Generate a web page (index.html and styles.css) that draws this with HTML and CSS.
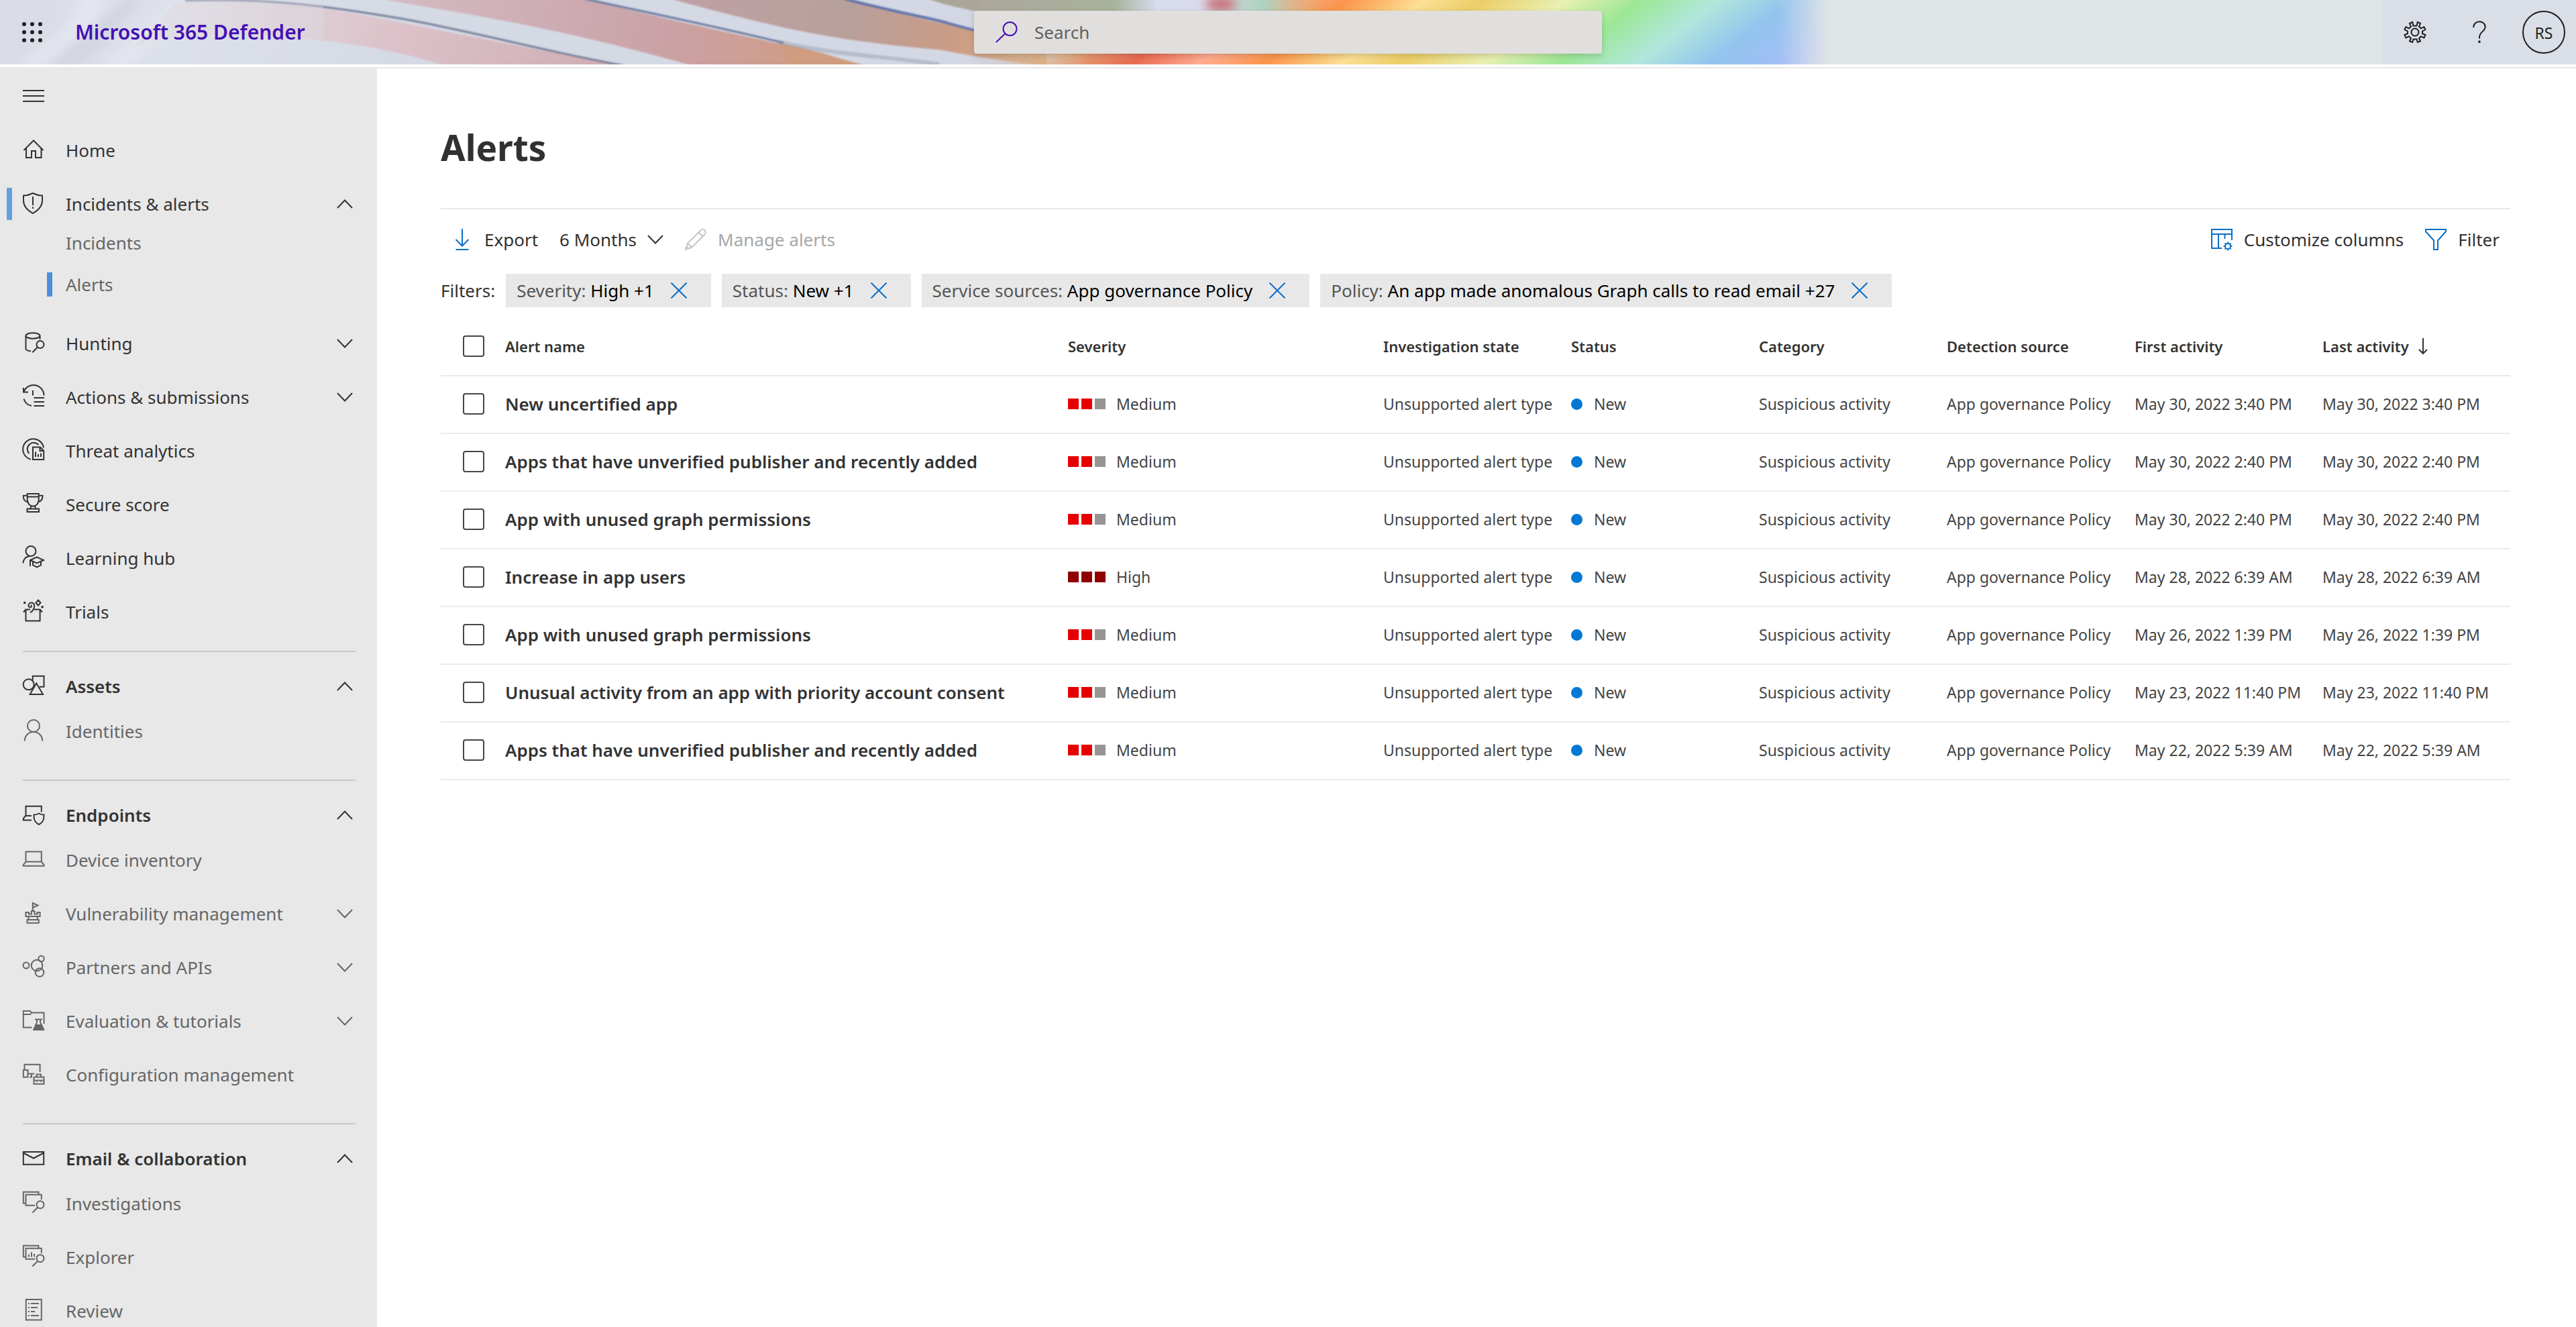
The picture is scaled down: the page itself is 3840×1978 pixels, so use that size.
FILE: index.html
```html
<!DOCTYPE html>
<html lang="en">
<head>
<meta charset="utf-8">
<meta name="viewport" content="width=device-width, initial-scale=1">
<title>Alerts - Microsoft 365 Defender</title>
<link rel="stylesheet" href="styles.css">
</head>
<body>
<svg class="sprite" aria-hidden="true">
  <symbol id="up" viewBox="0 0 24 14"><path d="M1 13 12 1.500 23 13"/></symbol>
  <symbol id="down" viewBox="0 0 24 14"><path d="M1 1 12 12.500 23 1"/></symbol>
  <symbol id="close" viewBox="0 0 24 24"><path d="M.5.5l23 23M23.500.5l-23 23"/></symbol>
</svg>
<div class="app">
  <header class="topbar">
    <svg class="banner" viewBox="0 0 3840 96" preserveAspectRatio="none" aria-hidden="true">
      <defs>
        <linearGradient id="gBase"><stop offset="0" stop-color="#d9dce7"/><stop offset=".06" stop-color="#dfe3ec"/><stop offset=".15" stop-color="#d5dae4"/><stop offset=".4" stop-color="#d3d7e4"/></linearGradient>
        <linearGradient id="gPink" gradientUnits="userSpaceOnUse" x1="270" y1="0" x2="930" y2="96"><stop offset="0" stop-color="#e3dfe5"/><stop offset=".5" stop-color="#dcc1c8"/><stop offset="1" stop-color="#cdadb2"/></linearGradient>
        <linearGradient id="gRose" gradientUnits="userSpaceOnUse" x1="565" y1="0" x2="1300" y2="96"><stop offset="0" stop-color="#d5bcc4"/><stop offset=".55" stop-color="#c9a3a9"/><stop offset=".85" stop-color="#cf9c88"/><stop offset="1" stop-color="#cf9a78"/></linearGradient>
        <linearGradient id="gBrown" gradientUnits="userSpaceOnUse" x1="1050" y1="0" x2="1500" y2="110"><stop offset="0" stop-color="#bfa0a4"/><stop offset=".45" stop-color="#b8a09c"/><stop offset=".8" stop-color="#c99c86"/><stop offset="1" stop-color="#d8aa80"/></linearGradient>
        <linearGradient id="gRainbow" gradientUnits="userSpaceOnUse" x1="1500" y1="85" x2="1965" y2="689">
          <stop offset="0" stop-color="#cfb8a8"/><stop offset=".06" stop-color="#e0b080"/><stop offset=".16" stop-color="#e96a50"/><stop offset=".24" stop-color="#ffac90"/><stop offset=".32" stop-color="#fb954a"/><stop offset=".41" stop-color="#fbe094"/><stop offset=".48" stop-color="#ecce68"/><stop offset=".58" stop-color="#e8f0b2"/><stop offset=".67" stop-color="#9ce795"/><stop offset=".76" stop-color="#b0e7dc"/><stop offset=".85" stop-color="#92c4ee"/><stop offset=".94" stop-color="#a2bdf7"/><stop offset="1" stop-color="#b4c0f8"/>
        </linearGradient>
        <linearGradient id="gIn" gradientUnits="userSpaceOnUse" x1="1440" y1="0" x2="1620" y2="0"><stop offset="0" stop-color="#000"/><stop offset="1" stop-color="#fff"/></linearGradient>
        <linearGradient id="gEnd" gradientUnits="userSpaceOnUse" x1="2650" y1="0" x2="2726" y2="0"><stop offset="0" stop-color="#dfe4e7" stop-opacity="0"/><stop offset="1" stop-color="#dfe4e7"/></linearGradient>
        <linearGradient id="gTop" gradientUnits="userSpaceOnUse" x1="1460" y1="0" x2="1990" y2="0"><stop offset="0" stop-color="#aca89a"/><stop offset=".38" stop-color="#a8b29c"/><stop offset=".5" stop-color="#d8dcec"/><stop offset=".64" stop-color="#d8dcec"/><stop offset=".8" stop-color="#aed2c0"/><stop offset="1" stop-color="#e5a860" stop-opacity="0"/></linearGradient>
        <linearGradient id="gDown" x1="0" y1="0" x2="0" y2="1"><stop offset=".25" stop-color="#fff"/><stop offset=".8" stop-color="#000"/></linearGradient>
        <mask id="mIn"><rect x="1440" width="1340" height="96" fill="url(#gIn)"/></mask>
        <mask id="mTop"><rect x="1440" width="560" height="96" fill="url(#gDown)"/></mask>
        <filter id="soft" x="-50%" y="-50%" width="200%" height="200%"><feGaussianBlur stdDeviation="8"/></filter>
        <filter id="fine"><feGaussianBlur stdDeviation="1"/></filter>
      </defs>
      <rect width="3840" height="96" fill="url(#gBase)"/>
      <g filter="url(#soft)"><path d="M20 100C80 70 110 30 120-6H160C150 40 110 80 80 100Z" fill="#e9ecf4"/><path d="M150 100C190 70 230 30 262-6H276C246 40 220 70 196 100Z" fill="#e7ebf4"/><path d="M66 100C110 60 150 30 190-6H215C180 40 150 70 120 100Z" fill="#cfd3df"/></g>
      <g filter="url(#fine)">
        <path d="M262 4C400-4 480 10 600 34 720 58 800 74 930 98H664C600 78 520 60 400 54 330 50 250 50 200 70Z" fill="url(#gPink)"/>
        <path d="M276 1C400-3 480 8 600 28 720 50 800 74 930 98" fill="none" stroke="#77809c" stroke-width="3"/>
        <path d="M565-2C700 22 830 40 1032 98H1290C1200 70 1080 50 868-2Z" fill="url(#gRose)"/>
        <path d="M998-2C1120 30 1220 60 1400 74 1440 82 1500 92 1560 98V62C1440 46 1380 30 1256-2Z" fill="url(#gBrown)"/>
        <path d="M1160 64C1230 76 1270 96 1300 100H1180Z" fill="#d09c80"/>
        <path d="M870-2C980 22 1080 42 1168 64" fill="none" stroke="#6779a0" stroke-width="3"/>
        <path d="M1258-2C1310 12 1360 22 1400 31 1440 42 1460 48 1500 56" fill="none" stroke="#5f74a8" stroke-width="4"/>
        <path d="M1382-2C1410 8 1440 14 1500 26V-2Z" fill="#a9a597"/>
      </g>
      <path d="M1160 62C1230 80 1320 84 1400 96" fill="none" stroke="#8d92a8" stroke-width="6" stroke-opacity=".4" filter="url(#fine)"/>
      <rect x="1440" width="1340" height="96" fill="url(#gRainbow)" mask="url(#mIn)"/>
      <rect x="1460" width="530" height="96" fill="url(#gTop)" mask="url(#mTop)"/>
      <ellipse cx="1820" cy="6" rx="24" ry="10" fill="#c9646c" filter="url(#soft)"/>
      <rect x="2640" width="1200" height="96" fill="url(#gEnd)"/>
      <rect width="482" height="96" fill="#d9dde6" fill-opacity=".35"/>
      <rect x="3552" width="288" height="96" fill="#dadee6"/>
    </svg>
    <div class="brand">
      <button class="bar-btn" type="button" aria-label="App launcher">
        <svg width="32" height="32" viewBox="0 0 32 32" fill="#201f1e"><g id="dots"><circle cx="4" cy="4" r="3"/><circle cx="16" cy="4" r="3"/><circle cx="28" cy="4" r="3"/></g><use href="#dots" y="12"/><use href="#dots" y="24"/></svg>
      </button>
      <a class="brand-name" href="#">Microsoft 365 Defender</a>
    </div>
    <label class="search">
      <svg class="line" width="34" height="32" viewBox="0 0 34 32"><circle cx="21.500" cy="11" r="10"/><path d="M14 18.500.8 31"/></svg>
      <input type="search" placeholder="Search" aria-label="Search">
    </label>
    <div class="bar-actions">
      <button class="bar-btn" type="button" aria-label="Settings">
        <svg class="line" width="34" height="32" viewBox="0 0 34 32"><circle cx="17" cy="16" r="5.500"/><path d="M14.500 6.500 13.200 1 9 2.800 11 7.800 8 10.300 3.500 8 1.500 12 6 14.500V18L1.500 20 3.500 24.500 8 22.200 11 25 9 29.500 13.200 31 14.500 26.500H19.500L20.800 31 25 29.500 23 25 26 22.200 30.500 24.500 32.500 20 28 18V14.500L32.500 12 30.500 8 26 10.300 23 7.800 25 2.800 20.800 1 19.500 6.500Z"/></svg>
      </button>
      <button class="bar-btn" type="button" aria-label="Help">
        <svg class="line" width="20" height="34" viewBox="0 0 20 34"><path d="M1.300 10C1 5 5 1.200 10 1.200S18.700 4.500 18.700 9C18.700 16 10 16 10 25V26.500"/><path d="M10 29.500V33" stroke-width="3"/></svg>
      </button>
      <button class="bar-btn" type="button" aria-label="Account manager for RS"><span class="avatar">RS</span></button>
    </div>
  </header>

  <div class="body">
    <nav class="sidebar" aria-label="Main">
      <button class="menu-btn" type="button" aria-label="Collapse navigation"><svg class="icon" viewBox="0 0 32 32"><path d="M0 8H32M0 16H32M0 24H32"/></svg></button>
      <a class="row" href="#"><svg class="icon" viewBox="0 0 32 32"><path d="M1.500 16 16 1.500 30.500 16M5 13V27H13V17H19V27H27.500V13"/></svg><span>Home</span></a>
      <button class="row current" type="button" aria-expanded="true"><svg class="icon" viewBox="0 0 32 32"><path d="M15 0C11 2 8 3.500 1 3.500V11C1 19 7 25.500 15 30 23 25.500 29 19 29 11V3.500C22 3.500 19 2 15 0ZM15 5V18M15 20.500V23"/></svg><span>Incidents &amp; alerts</span><svg class="chev"><use href="#up"/></svg></button>
      <div class="sublist">
        <a class="subrow" href="#">Incidents</a>
        <a class="subrow current" href="#" aria-current="page">Alerts</a>
      </div>
      <button class="row" type="button"><svg class="icon" viewBox="0 0 32 32"><ellipse cx="15" cy="4.500" rx="10.500" ry="4.200"/><path d="M4.500 4.500V24C4.500 26 8 27 12 27.500M25.500 4.500V10M22 21.500 14.400 29.300"/><circle cx="26" cy="17.500" r="5.500"/></svg><span>Hunting</span><svg class="chev"><use href="#down"/></svg></button>
      <button class="row" type="button"><svg class="icon" viewBox="0 0 32 32"><path d="M1 2V8.500H8M1.500 8A15.500 15.500 0 0 1 31.500 13.600M15 6V13.500M1.500 18.500A15.500 15.500 0 0 0 13 29M16.500 17H32M16.500 23H32M16.500 29H32"/></svg><span>Actions &amp; submissions</span><svg class="chev"><use href="#down"/></svg></button>
      <a class="row" href="#"><svg class="icon" viewBox="0 0 32 32"><path d="M31 11.500A15.500 15.500 0 1 0 12 28.700M23.500 7A9.500 9.500 0 1 0 9.300 20M15 10.500H26L31.200 16V29H15ZM25.500 10.500V16H31M19 17.500V25M23 21V25M27 19.500V25"/></svg><span>Threat analytics</span></a>
      <a class="row" href="#"><svg class="icon" viewBox="0 0 32 32"><path d="M6.700 0H23.800V8C23.800 22 6.700 22 6.700 8ZM6.700 4.500H23.800M6.700 2.700H.8C.5 8 3 12 8 12.500M23.800 2.700H29.500C29.800 8 27 12 22.500 12.500M12.500 18.500 11 22.500M18 18.500 19.500 22.500M6.500 27V22.500H24V27Z"/></svg><span>Secure score</span></a>
      <a class="row" href="#"><svg class="icon" viewBox="0 0 32 32"><circle cx="12" cy="5.500" r="7.500"/><path d="M.5 23.500C1 17 5 13.500 10 13M11 28V19L21 14.300 31 19 21 23.500 11 19M15 21V26.500L21 29.500 27 26.500V21"/></svg><span>Learning hub</span></a>
      <a class="row" href="#"><svg class="icon" viewBox="0 0 32 32"><path d="M11 12.500H4.500V29.500H25.600V12.500H17M4.500 12.500 1 16.500M25.600 12.500 29 16.500M11 17C17 14 20 4 14 2.500 9 1.500 7 7 10 9 13 10 14 6.500 12 6M23-1.500 26.500 2.500 23 6.500 19.500 2.500Z"/><path d="M1 2.500H4.500M2.700.8V4.300M27.300 8.700H31M29 7V10.500"/></svg><span>Trials</span></a>

      <hr class="first">
      <button class="head" type="button" aria-expanded="true"><svg class="icon" viewBox="0 0 32 32"><circle cx="8.700" cy="13.300" r="8"/><path d="M14.700 9V.8H31.500V16.800H25M20.300 11.500 30 28H10.600Z"/></svg><span>Assets</span><svg class="chev"><use href="#up"/></svg></button>
      <a class="row soft" href="#"><svg class="icon" viewBox="0 0 32 32"><circle cx="16" cy="8" r="9"/><path d="M2.700 30.500C3 22 9 17 16 17S29 22 29.300 30.500"/></svg><span>Identities</span></a>

      <hr>
      <button class="head" type="button" aria-expanded="true"><svg class="icon" viewBox="0 0 32 32"><path d="M27.800 11.500V2.700H4.500V17M4.500 16.500 .8 21V23.500H13M4.500 17H13M24 13.500C21.500 15 19 15.500 16.500 15.500 16 23 18 27 24 30 30 27 32 23 31.500 15.500 29 15.500 26.500 15 24 13.500Z"/></svg><span>Endpoints</span><svg class="chev"><use href="#up"/></svg></button>
      <a class="row soft" href="#"><svg class="icon" viewBox="0 0 32 32"><path d="M4.500 18.500V3.500H27.800V18.500M4.500 18.500H27.800L31.500 23V24.800H.8V23Z"/></svg><span>Device inventory</span></a>
      <button class="row soft" type="button"><svg class="icon" viewBox="0 0 32 32"><path d="M14.800 13V0L22.500 3.500 14.800 7M4.500 14H9V16.500H13V12H17.500V16.500H21.500V14H25.600V20H4.500ZM8.500 20V25M21.800 20V25M6.500 29.700V25H23.800V29.700Z"/></svg><span>Vulnerability management</span><svg class="chev"><use href="#down"/></svg></button>
      <button class="row soft" type="button"><svg class="icon" viewBox="0 0 32 32"><circle cx="5" cy="13" r="4.500"/><circle cx="21" cy="13" r="8.300"/><circle cx="27.500" cy="3" r="4.200"/><circle cx="25" cy="23.500" r="6.300"/></svg><span>Partners and APIs</span><svg class="chev"><use href="#down"/></svg></button>
      <button class="row soft" type="button"><svg class="icon" viewBox="0 0 32 32"><path d="M13.500 25.500H.8V1H11L13 3.500H31.500V20M.8 6H11L13 3.500M18 13.500H29M21 13.500V18L16.500 28.500H31L26 18V13.500"/><path d="M19.500 22H28L31 29H16.500Z" fill="currentColor"/></svg><span>Evaluation &amp; tutorials</span><svg class="chev"><use href="#down"/></svg></button>
      <a class="row soft" href="#"><svg class="icon" viewBox="0 0 32 32"><path d="M2.500 9V.8H25.600V12M.8 9H7.500V19.500H.8ZM7.500 14.500H17M13 14.500V19M10 19.500H14M16.500 19.500H31.500V29.700H16.500ZM20.500 19.500V15.500H27V19.500M16.500 24.500H31.500M21 23.500V26.500M27 23.500V26.500"/></svg><span>Configuration management</span></a>

      <hr>
      <button class="head" type="button" aria-expanded="true"><svg class="icon" viewBox="0 0 32 32"><path d="M.8 6H31.200V24.800H.8ZM.8 7.500 16 15.500 31.200 7.500"/></svg><span>Email &amp; collaboration</span><svg class="chev"><use href="#up"/></svg></button>
      <a class="row soft" href="#"><svg class="icon" viewBox="0 0 32 32"><path d="M4.500 15.500H.8V-1.200H23.500V2.700M18 18.800H4.500V2.800H27.800V10M22 22 14.400 29.500"/><circle cx="26" cy="17.700" r="5.500"/></svg><span>Investigations</span></a>
      <a class="row soft" href="#"><svg class="icon" viewBox="0 0 32 32"><path d="M4.500 15.500H.8V-1.200H23.500V2.700M18 18.800H4.500V2.800H27.800V10M22 22 14.400 29.500M9 12V15.500M13 8.500V15.500M17 11V15.500"/><circle cx="26" cy="17.700" r="5.500"/></svg><span>Explorer</span></a>
      <a class="row soft" href="#"><svg class="icon" viewBox="0 0 32 32"><path d="M4.800-1H27.800V29.500H4.800ZM8 5H10M12 5H24M8 11H10M12 11H22M8 17H10M12 17H18M8 23H10M12 23H24"/></svg><span>Review</span></a>
    </nav>

    <main class="content">
      <h1>Alerts</h1>
      <div class="toolbar">
        <button class="tool" type="button"><svg class="blue" width="32" height="32" viewBox="0 0 32 32"><path d="M16 0V25M6.500 16 16 25.500 25.500 16M6.500 31H25.500"/></svg>Export</button>
        <label class="period"><select aria-label="Period"><option>6 Months</option></select><svg class="chev"><use href="#down"/></svg></label>
        <button class="tool off" type="button" disabled><svg width="32" height="32" viewBox="0 0 32 32"><path d="M1 31 4 21.500 23.500 2.500C25.500.5 28 .5 29.500 2S31.500 6.500 29.500 8.500L10 27.800ZM4 21.500 10 27.800M20.500 5.500 26.500 11.500M2.500 26.500 5.500 29.500"/></svg>Manage alerts</button>
        <span class="grow"></span>
        <button class="tool" type="button"><svg class="blue" width="32" height="32" viewBox="0 0 32 32"><path d="M16 29H1V1H31V17M1 8H31M11 8V29M20.500 8V15"/><circle cx="25" cy="26" r="4"/><path d="M25 19.500V22M25 30V32.500M18.500 26H21M29 26H31.500M20.500 21.500 22 23M28 29 29.500 30.500M29.500 21.500 28 23M22 29 20.500 30.500"/></svg>Customize columns</button>
        <button class="tool" type="button"><svg class="blue" width="32" height="32" viewBox="0 0 32 32"><path d="M1 1H31V4L19 17.500V31H13V17.500L1 4Z"/></svg>Filter</button>
      </div>
      <div class="filters">
        <span>Filters:</span>
        <div class="pill"><span>Severity: <b>High +1</b></span><button type="button" aria-label="Remove severity filter"><svg class="blue" width="24" height="24"><use href="#close"/></svg></button></div>
        <div class="pill"><span>Status: <b>New +1</b></span><button type="button" aria-label="Remove status filter"><svg class="blue" width="24" height="24"><use href="#close"/></svg></button></div>
        <div class="pill"><span>Service sources: <b>App governance Policy</b></span><button type="button" aria-label="Remove service sources filter"><svg class="blue" width="24" height="24"><use href="#close"/></svg></button></div>
        <div class="pill"><span>Policy: <b>An app made anomalous Graph calls to read email +27</b></span><button type="button" aria-label="Remove policy filter"><svg class="blue" width="24" height="24"><use href="#close"/></svg></button></div>
      </div>
      <table class="alerts">
        <colgroup><col class="c-check"><col><col class="c-sev"><col span="6" class="c-std"></colgroup>
        <thead>
          <tr><th><input type="checkbox" aria-label="Select all alerts"></th><th>Alert name</th><th>Severity</th><th>Investigation state</th><th>Status</th><th>Category</th><th>Detection source</th><th>First activity</th><th aria-sort="descending"><span class="sort">Last activity<svg width="14" height="24" viewBox="0 0 14 24"><path d="M7 0V23M1 17 7 23 13 17"/></svg></span></th></tr>
        </thead>
        <tbody>
          <tr><td><input type="checkbox" aria-label="Select alert 1"></td><td class="name">New uncertified app</td><td><span class="sev medium"><i></i><i></i><i></i>Medium</span></td><td>Unsupported alert type</td><td><span class="status">New</span></td><td>Suspicious activity</td><td>App governance Policy</td><td>May 30, 2022 3:40 PM</td><td>May 30, 2022 3:40 PM</td></tr>
          <tr><td><input type="checkbox" aria-label="Select alert 2"></td><td class="name">Apps that have unverified publisher and recently added</td><td><span class="sev medium"><i></i><i></i><i></i>Medium</span></td><td>Unsupported alert type</td><td><span class="status">New</span></td><td>Suspicious activity</td><td>App governance Policy</td><td>May 30, 2022 2:40 PM</td><td>May 30, 2022 2:40 PM</td></tr>
          <tr><td><input type="checkbox" aria-label="Select alert 3"></td><td class="name">App with unused graph permissions</td><td><span class="sev medium"><i></i><i></i><i></i>Medium</span></td><td>Unsupported alert type</td><td><span class="status">New</span></td><td>Suspicious activity</td><td>App governance Policy</td><td>May 30, 2022 2:40 PM</td><td>May 30, 2022 2:40 PM</td></tr>
          <tr><td><input type="checkbox" aria-label="Select alert 4"></td><td class="name">Increase in app users</td><td><span class="sev high"><i></i><i></i><i></i>High</span></td><td>Unsupported alert type</td><td><span class="status">New</span></td><td>Suspicious activity</td><td>App governance Policy</td><td>May 28, 2022 6:39 AM</td><td>May 28, 2022 6:39 AM</td></tr>
          <tr><td><input type="checkbox" aria-label="Select alert 5"></td><td class="name">App with unused graph permissions</td><td><span class="sev medium"><i></i><i></i><i></i>Medium</span></td><td>Unsupported alert type</td><td><span class="status">New</span></td><td>Suspicious activity</td><td>App governance Policy</td><td>May 26, 2022 1:39 PM</td><td>May 26, 2022 1:39 PM</td></tr>
          <tr><td><input type="checkbox" aria-label="Select alert 6"></td><td class="name">Unusual activity from an app with priority account consent</td><td><span class="sev medium"><i></i><i></i><i></i>Medium</span></td><td>Unsupported alert type</td><td><span class="status">New</span></td><td>Suspicious activity</td><td>App governance Policy</td><td>May 23, 2022 11:40 PM</td><td>May 23, 2022 11:40 PM</td></tr>
          <tr><td><input type="checkbox" aria-label="Select alert 7"></td><td class="name">Apps that have unverified publisher and recently added</td><td><span class="sev medium"><i></i><i></i><i></i>Medium</span></td><td>Unsupported alert type</td><td><span class="status">New</span></td><td>Suspicious activity</td><td>App governance Policy</td><td>May 22, 2022 5:39 AM</td><td>May 22, 2022 5:39 AM</td></tr>
        </tbody>
      </table>
    </main>
  </div>
</div>
</body>
</html>
```
FILE: styles.css
```css
* { box-sizing: border-box; }

body {
  margin: 0;
  background: #fff;
  color: #323130;
  font-family: "Noto Sans", "Open Sans", sans-serif;
  font-size: 26px;
  line-height: 36px;
}

button, input, select {
  margin: 0;
  padding: 0;
  border: 0;
  background: none;
  color: inherit;
  font: inherit;
  text-align: left;
}

a { color: inherit; text-decoration: none; }
svg { display: block; flex: none; overflow: visible; }
.sprite { position: absolute; width: 0; height: 0; }
.line, .icon, .chev, .blue, .tool svg, .sort svg { fill: none; stroke: currentColor; stroke-width: 2; }
.icon { width: 32px; height: 32px; }
.chev { width: 24px; height: 14px; }
.blue { color: #0b6fc8; }

.app { display: flex; flex-direction: column; height: 100vh; overflow: hidden; }

/* Top bar */
.topbar {
  position: relative;
  display: grid;
  grid-template-columns: 1fr 936px 1fr;
  align-items: center;
  height: 96px;
  margin-bottom: 4px;
  flex: none;
  color: #201f1e;
}
.banner { position: absolute; inset: 0; width: 100%; height: 100%; z-index: -1; overflow: hidden; }
.brand { display: flex; align-items: center; gap: 16px; }
.brand-name { color: #4510b4; font-size: 30px; font-weight: 600; }
.bar-btn { display: flex; align-items: center; justify-content: center; width: 96px; height: 96px; }
.bar-actions { display: flex; justify-content: flex-end; }
.avatar {
  width: 64px;
  height: 64px;
  border: 2px solid #201f1e;
  border-radius: 50%;
  font-size: 23px;
  line-height: 62px;
  text-align: center;
}
.search {
  display: flex;
  align-items: center;
  gap: 24px;
  height: 64px;
  padding: 0 32px;
  border-radius: 4px;
  background: #e1dfdd;
  box-shadow: 0 3px 8px rgba(0, 0, 0, .16);
  color: #4510b4;
}
.search input { flex: 1; color: #333; outline: 0; }
.search input::placeholder { color: #616161; opacity: 1; }

/* Side navigation */
.body { display: flex; flex: 1; min-height: 0; border-top: 2px solid #e8e8e8; }
.sidebar {
  width: 562px;
  flex: none;
  overflow: hidden;
  background: #e8e8e8;
  color: #333;
}
.menu-btn { display: flex; align-items: center; height: 82px; padding-left: 34px; }
.row, .head {
  display: flex;
  align-items: center;
  gap: 32px;
  width: 100%;
  height: 80px;
  padding: 0 36px 0 34px;
}
.row span, .head span { flex: 1; }
.row.current { gap: 0; padding-left: 10px; }
.row.current::before { content: ""; width: 8px; height: 48px; margin-right: 16px; background: #649fdd; }
.row.current .icon { margin-right: 32px; }
.row.soft { color: #666; }
.head { height: 54px; font-weight: 600; }
.sublist { display: flex; flex-direction: column; gap: 26px; padding: 0 0 30px 70px; color: #666; }
.subrow { display: flex; align-items: center; gap: 20px; height: 36px; }
.subrow::before { content: ""; width: 8px; height: 36px; }
.subrow.current::before { background: #4a90da; }
.sidebar hr { height: 2px; margin: 32px 32px 24px 34px; border: 0; background: #c8c8c8; }
.sidebar hr.first { margin-top: 18px; }

/* Alerts page */
.content { flex: 1; min-width: 0; padding: 86px 98px 0 95px; }
h1 { margin: 0 0 58px; font-size: 53px; line-height: 64px; font-weight: 700; }
.toolbar {
  display: flex;
  align-items: center;
  gap: 32px;
  height: 92px;
  padding: 0 16px;
  border-top: 2px solid #e8e8e8;
}
.tool { display: flex; align-items: center; gap: 17px; }
.tool.off { color: #a6a6a6; }
.tool.off svg { color: #c8c6c4; }
.grow { flex: 1; }
.period { display: grid; align-items: center; }
.period select { grid-area: 1 / 1; appearance: none; padding-right: 40px; }
.period .chev { grid-area: 1 / 1; justify-self: end; pointer-events: none; }

.filters { display: flex; align-items: center; gap: 16px; margin-top: 6px; }
.pill {
  display: flex;
  align-items: center;
  gap: 25px;
  height: 50px;
  padding: 0 36px 0 16px;
  background: #e8e8e8;
  color: #555;
}
.pill b { color: #000; font-weight: 400; }

.alerts {
  width: 100%;
  margin-top: 14px;
  border-collapse: collapse;
  table-layout: fixed;
  font-size: 23px;
  line-height: 32px;
  color: #444;
}
.c-check { width: 96px; }
.c-sev { width: 470px; }
.c-std { width: 280px; }
.alerts th, .alerts td { padding: 0; border-bottom: 2px solid #ebebeb; text-align: left; white-space: nowrap; }
.alerts th { height: 88px; color: #333; font-size: 22px; font-weight: 600; }
.alerts td { height: 86px; padding-bottom: 2px; }
.alerts input {
  display: block;
  appearance: none;
  width: 32px;
  height: 32px;
  margin-left: 33px;
  border: 2px solid #484644;
  border-radius: 4px;
}
.alerts .name { color: #333; font-size: 26px; font-weight: 600; }
.sort { display: flex; align-items: center; gap: 14px; }
.sev { display: flex; align-items: center; gap: 4px; }
.sev i { width: 16px; height: 16px; background: #979593; }
.sev i:nth-child(3) { margin-right: 12px; }
.medium i:nth-child(-n+2) { background: #e60000; }
.high i { background: #900000; }
.status { display: flex; align-items: center; gap: 17px; }
.status::before { content: ""; width: 17px; height: 17px; border-radius: 50%; background: #0078d4; }
```
